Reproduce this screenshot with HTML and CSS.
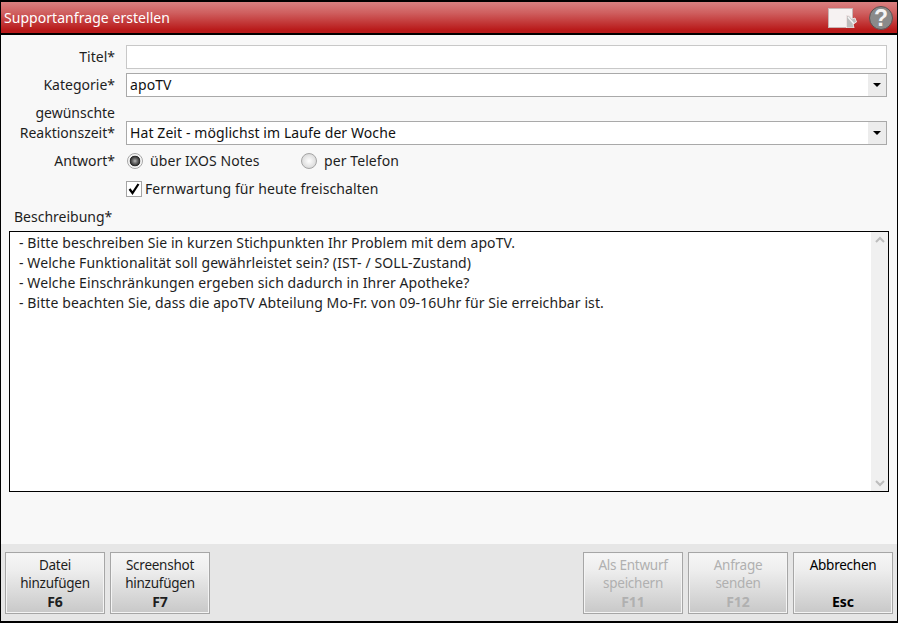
FILE: index.html
```html
<!DOCTYPE html>
<html lang="de">
<head>
<meta charset="utf-8">
<title>Supportanfrage erstellen</title>
<link rel="stylesheet" href="styles.css">
</head>
<body>
<div class="window">
  <header class="titlebar">
    <span class="title">Supportanfrage erstellen</span>
    <svg class="icon-export" width="29" height="20" viewBox="0 0 29 20">
      <rect x="0.5" y="0.5" width="24" height="19" fill="#f6f2f2" stroke="#c9b6b6"/>
      <path d="M18.5 7.5l3 .5 2.500 3 3-1 1.500 4-3.500 2 1 4h-7.500z" fill="#bcbcbc" stroke="#efe2e2"/>
      <path d="M20 9l6 7" fill="none" stroke="#f2f2f2" stroke-width="1.500"/>
    </svg>
    <svg class="icon-help" width="24" height="24" viewBox="0 0 24 24">
      <circle cx="12" cy="12" r="11.500" fill="#8a8a8a" stroke="#5d5050"/>
      <text x="12" y="20" text-anchor="middle" class="help-mark">?</text>
    </svg>
  </header>
  <main class="content">
    <div class="form">
      <label class="label">Titel*</label>
      <div class="field field-light"></div>
      <label class="label">Kategorie*</label>
      <div class="field"><span class="value">apoTV</span><span class="drop"><i></i></span></div>
      <label class="label label-tall">gewünschte<br>Reaktionszeit*</label>
      <div class="field field-self"><span class="value">Hat Zeit - möglichst im Laufe der Woche</span><span class="drop"><i></i></span></div>
      <label class="label">Antwort*</label>
      <div class="radios">
        <span class="radio-item radio-first"><span class="radio radio-on"></span><span class="opt">über IXOS Notes</span></span>
        <span class="radio-item"><span class="radio"></span><span class="opt">per Telefon</span></span>
      </div>
      <span></span>
      <div class="check-row">
        <span class="check"><svg width="14" height="14" viewBox="0 0 14 14"><path d="M2.500 7l3 4 6-9" fill="none" stroke="#000" stroke-width="2.200"/></svg></span>
        <span class="opt">Fernwartung für heute freischalten</span>
      </div>
    </div>
    <div class="desc-label">Beschreibung*</div>
    <div class="desc">
      <div class="desc-text">
        <p>- Bitte beschreiben Sie in kurzen Stichpunkten Ihr Problem mit dem apoTV.</p>
        <p>- Welche Funktionalität soll gewährleistet sein? (IST- / SOLL-Zustand)</p>
        <p>- Welche Einschränkungen ergeben sich dadurch in Ihrer Apotheke?</p>
        <p>- Bitte beachten Sie, dass die apoTV Abteilung Mo-Fr. von 09-16Uhr für Sie erreichbar ist.</p>
      </div>
      <div class="scroll">
        <svg width="10" height="7" viewBox="0 0 10 7"><path d="M1 6l4-4 4 4" fill="none" stroke="#bdbdbd" stroke-width="2"/></svg>
        <svg width="10" height="7" viewBox="0 0 10 7"><path d="M1 1l4 4 4-4" fill="none" stroke="#bdbdbd" stroke-width="2"/></svg>
      </div>
    </div>
  </main>
  <footer class="footer">
    <div class="btn"><span>Datei</span><span>hinzufügen</span><b>F6</b></div>
    <div class="btn"><span>Screenshot</span><span>hinzufügen</span><b>F7</b></div>
    <div class="spacer"></div>
    <div class="btn btn-off"><span>Als Entwurf</span><span>speichern</span><b>F11</b></div>
    <div class="btn btn-off"><span>Anfrage</span><span>senden</span><b>F12</b></div>
    <div class="btn btn-black"><span>Abbrechen</span><span>&nbsp;</span><b>Esc</b></div>
  </footer>
</div>
</body>
</html>
```

FILE: styles.css
```css
* { box-sizing: border-box; }
html, body { margin: 0; padding: 0; }
body {
  width: 898px;
  height: 623px;
  overflow: hidden;
  font-family: "Noto Sans", "Open Sans", sans-serif;
  font-size: 14px;
  color: #1e1e1e;
}
.window {
  width: 898px;
  height: 623px;
  display: flex;
  flex-direction: column;
  border: 1px solid #000;
  border-top-width: 2px;
  border-bottom-width: 2px;
  background: #f8f8f8;
}
.titlebar {
  height: 33px;
  flex: none;
  display: flex;
  align-items: center;
  border-bottom: 2px solid #000;
  background: linear-gradient(#d98080, #cf5f5f 35%, #b91a1a 90%);
  padding: 0 3px 0 3px;
}
.title { color: #fff; font-size: 14px; flex: 1; letter-spacing: 0.05px; }
.icon-export { margin-right: 12px; margin-top: 1px; }
.icon-help { margin-right: 1px; }
.help-mark { font-family: "Liberation Sans", sans-serif; font-size: 23px; font-weight: bold; fill: #f4f4f4; }
.content { flex: 1; padding: 10px 9px 0 8px; min-height: 0; }
.form {
  display: grid;
  grid-template-columns: 106px 761px;
  column-gap: 11px;
  align-items: center;
}
.label { text-align: right; line-height: 24px; margin-bottom: 4px; }
.label-tall { line-height: 20px; padding-top: 2px; margin-bottom: 6px; align-self: end; }
.field {
  height: 24px;
  border: 1px solid #a9a9a9;
  background: #fff;
  display: flex;
  align-items: center;
  margin-bottom: 4px;
}
.field-light { border-color: #c8c8c8; }
.field-self { align-self: end; }
.value { flex: 1; padding: 0 0 2px 3px; color: #111; letter-spacing: 0.09px; }
.drop {
  width: 18px;
  height: 100%;
  background: #ececec;
  display: flex;
  align-items: center;
  justify-content: center;
}
.drop i {
  width: 0;
  height: 0;
  border-left: 4px solid transparent;
  border-right: 4px solid transparent;
  border-top: 4px solid #000;
}
.radios { display: flex; align-items: center; height: 24px; margin-bottom: 4px; letter-spacing: 0.09px; }
.radio-item { display: flex; align-items: center; }
.radio-first { width: 174px; }
.opt { padding-bottom: 2px; }
.radio {
  width: 16px;
  height: 16px;
  border-radius: 50%;
  border: 1px solid #a5a5a5;
  background: radial-gradient(circle 7px at 50% 50%, #fff, #dcdcdc);
  margin: 0 7px 0 1px;
}
.radio-on {
  background: radial-gradient(circle 7px at 7px 7px, #b8b8b8 0, #777 2px, #333 4.500px, #222 5px, #e8e8e8 5.600px, #fff 7px);
}
.check-row { display: flex; align-items: center; height: 24px; letter-spacing: 0.09px; }
.check {
  width: 16px;
  height: 16px;
  border: 1px solid #a5a5a5;
  background: #fff;
  margin-right: 3px;
  display: flex;
  align-items: center;
  justify-content: center;
}
.desc-label { margin: 6px 0 0 5px; height: 20px; line-height: 20px; }
.desc {
  margin-top: 4px;
  width: 880px;
  height: 261px;
  border: 1px solid #000;
  background: #fff;
  display: flex;
}
.desc-text { flex: 1; padding: 1px 0 0 9px; letter-spacing: 0.09px; }
.desc-text p { margin: 0; height: 20px; line-height: 20px; }
.scroll {
  width: 17px;
  background: #f0f0f0;
  display: flex;
  flex-direction: column;
  justify-content: space-between;
  align-items: center;
  padding: 4px 0;
}
.footer {
  flex: none;
  height: 77px;
  background: #e6e6e6;
  display: flex;
  gap: 5px;
  padding: 8px 4px 7px 4px;
}
.spacer { flex: 1; }
.btn {
  width: 100px;
  height: 62px;
  border: 1px solid #a6a6a6;
  background: linear-gradient(#f6f6f6, #ededed 30%, #c8c8c8);
  display: flex;
  flex-direction: column;
  align-items: center;
  line-height: 18px;
  padding-top: 3px;
  font-size: 13.500px;
  letter-spacing: -0.25px;
  box-shadow: inset 0 0 0 1px #f4f4f4;
}
.btn b { font-size: 14px; letter-spacing: 0; line-height: 19px; }
.btn-off { color: #b0b0b0; }
.btn-black { color: #000; }
```
